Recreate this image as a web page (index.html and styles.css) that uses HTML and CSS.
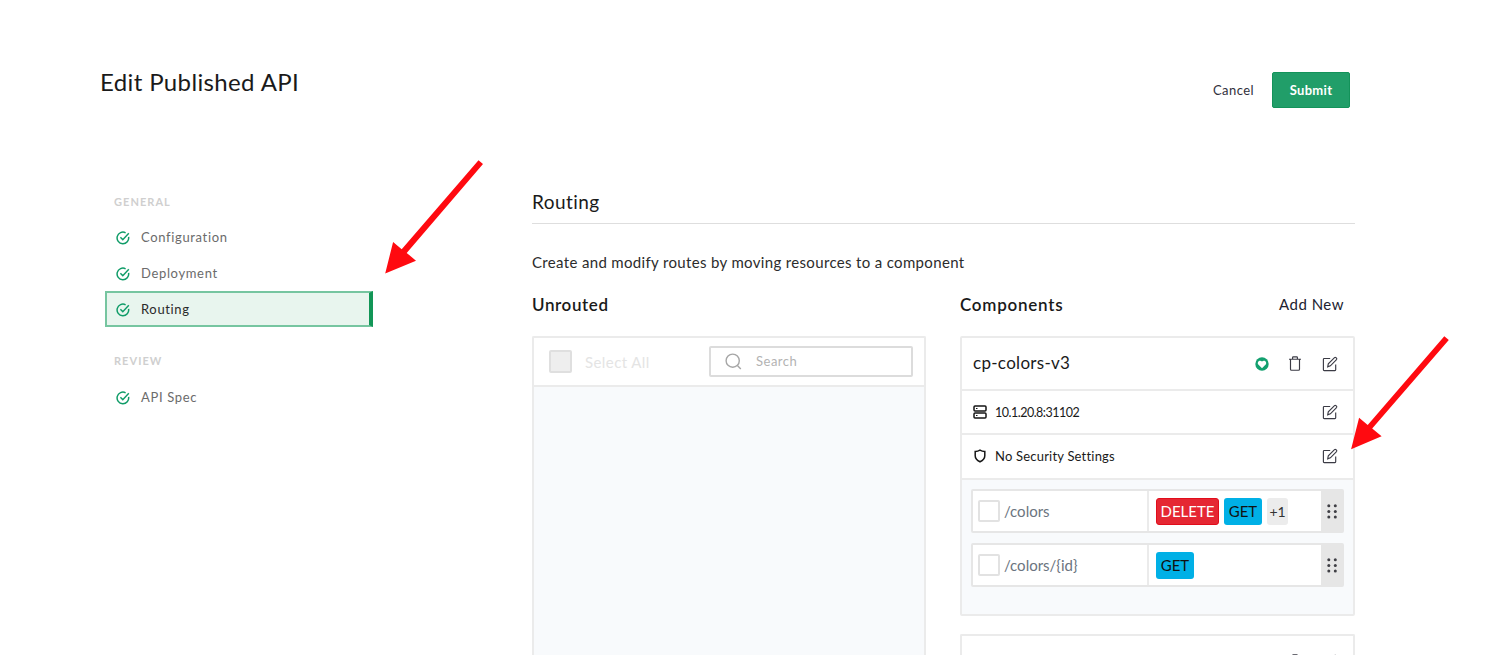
FILE: index.html
```html
<!DOCTYPE html>
<html lang="en">
<head>
<meta charset="utf-8">
<title>Edit Published API</title>
<link rel="stylesheet" href="styles.css">
</head>
<body>
<svg class="defs" width="0" height="0" aria-hidden="true">
  <symbol id="check" viewBox="0 0 14 14"><path d="M12.6 5.9A5.8 5.8 0 1 1 9.6 1.8M4.4 6.3l2.4 2.4 6-6.4" fill="none" stroke="currentColor" stroke-width="1.5"/></symbol>
  <symbol id="edit" viewBox="0 0 16 16"><path d="M8.2 2.5H2.2a.8.8 0 0 0-.8.8v10.5a.8.8 0 0 0 .8.8h10.7a.8.8 0 0 0 .8-.8V8.6M5.7 10.8l.6-3 6.2-6.2q.7-.6 1.4 0l.6.6q.6.7 0 1.4L8.4 9.8Z" fill="none" stroke="currentColor" stroke-width="1.15"/></symbol>
  <symbol id="trash" viewBox="0 0 12 15"><path d="M0 3.2h12M3.6 3V1.500q0-.7.7-.7h3.400q.7 0 .7.7V3M1.500 3.200v10q0 1 1 1h7q1 0 1-1v-10" fill="none" stroke="currentColor" stroke-width="1.15"/></symbol>
  <symbol id="dots" viewBox="0 0 10 15"><g fill="currentColor"><circle cx="1.8" cy="1.8" r="1.5"/><circle cx="8.3" cy="1.8" r="1.5"/><circle cx="1.8" cy="7.4" r="1.5"/><circle cx="8.3" cy="7.4" r="1.5"/><circle cx="1.8" cy="13" r="1.5"/><circle cx="8.3" cy="13" r="1.5"/></g></symbol>
</svg>
<header class="header">
  <h1 class="title">Edit Published API</h1>
  <div class="actions"><span class="cancel">Cancel</span><button class="submit">Submit</button></div>
</header>
<div class="layout">
  <nav class="nav">
    <h2 class="nav-title">GENERAL</h2>
    <a class="nav-item"><svg class="check"><use href="#check"/></svg><span>Configuration</span></a>
    <a class="nav-item"><svg class="check"><use href="#check"/></svg><span>Deployment</span></a>
    <a class="nav-item active"><svg class="check"><use href="#check"/></svg><span>Routing</span></a>
    <h2 class="nav-title review">REVIEW</h2>
    <a class="nav-item"><svg class="check"><use href="#check"/></svg><span>API Spec</span></a>
  </nav>
  <main class="main">
    <h2 class="section-title">Routing</h2>
    <p class="intro">Create and modify routes by moving resources to a component</p>
    <div class="columns">
      <section class="column">
        <div class="column-head"><h3>Unrouted</h3></div>
        <div class="unrouted">
          <div class="toolbar">
            <span class="box disabled"></span><span class="select-all">Select All</span>
            <div class="search"><svg width="17" height="17" viewBox="0 0 17 17"><g fill="none" stroke="#a6a6a6" stroke-width="1.4"><circle cx="7.7" cy="7.7" r="6.6"/><path d="M12.4 12.4l3.400 3.500"/></g></svg><span>Search</span></div>
          </div>
        </div>
      </section>
      <section class="column">
        <div class="column-head"><h3 class="components">Components</h3><a class="add-new">Add New</a></div>
        <article class="card">
          <div class="card-head">
            <span class="card-name">cp-colors-v3</span>
            <div class="tools">
              <svg width="14" height="14" viewBox="0 0 14 14"><circle cx="7" cy="7" r="6.7" fill="#13a06f"/><path d="M7 11.200L3.300 7.500C1.600 5.300 4.600 2.100 7 4.500c2.400-2.400 5.400.8 3.700 3Z" fill="#fff"/></svg>
              <svg class="trash"><use href="#trash"/></svg>
              <svg class="edit"><use href="#edit"/></svg>
            </div>
          </div>
          <div class="card-row"><svg width="14" height="14" viewBox="0 0 14 14"><g fill="none" stroke="#151515" stroke-width="1.5"><rect x="1" y="1" width="12" height="5" rx="1"/><rect x="1" y="8" width="12" height="5" rx="1"/><path d="M3 3.500h1.500M3 10.500h1.500" stroke-width="1"/></g></svg><span class="address">10.1.20.8:31102</span><svg class="edit"><use href="#edit"/></svg></div>
          <div class="card-row security"><svg width="14" height="14" viewBox="0 0 14 14"><path d="M7 1.200q2.400 1.400 4.800 1.300v4.200C11.800 9.500 9.800 11.500 7 12.800 4.200 11.500 2.200 9.500 2.200 6.700V2.500Q4.600 2.600 7 1.200Z" fill="none" stroke="#151515" stroke-width="1.5"/></svg><span>No Security Settings</span><svg class="edit"><use href="#edit"/></svg></div>
          <div class="routes">
            <div class="route">
              <div class="path"><span class="box"></span><span>/colors</span></div>
              <div class="methods"><span class="badge delete">DELETE</span><span class="badge get">GET</span><span class="badge more">+1</span></div>
              <div class="handle"><svg width="10" height="15"><use href="#dots"/></svg></div>
            </div>
            <div class="route">
              <div class="path"><span class="box"></span><span>/colors/{id}</span></div>
              <div class="methods"><span class="badge get">GET</span></div>
              <div class="handle"><svg width="10" height="15"><use href="#dots"/></svg></div>
            </div>
          </div>
        </article>
        <article class="card next">
          <div class="tools"><svg class="trash"><use href="#trash"/></svg><svg class="edit"><use href="#edit"/></svg></div>
        </article>
      </section>
    </div>
  </main>
</div>
<svg class="arrow arrow-nav" width="104" height="120" viewBox="382 157 104 120"><path d="M478.500 160.200l4.500 3.900-76.300 88.800 9.300 7.800-30.800 12.800 7.900-31.500 8.600 7.300Z" fill="#ff0a10"/></svg>
<svg class="arrow arrow-card" width="104" height="120" viewBox="1348 333 104 120"><path d="M1444.300 336.200l4.500 3.900-76.600 88.400 9.400 7.800-30.500 12.900 8-31.500 8.600 7.300Z" fill="#ff0a10"/></svg>
</body>
</html>
```

FILE: styles.css
```css
* { box-sizing: border-box; }
body { margin: 0; width: 1500px; height: 655px; overflow: hidden; position: relative; background: #fff; color: #1a1a1a; font-family: Lato, "Open Sans", sans-serif; font-size: 14px; white-space: nowrap; }
h1, h2, h3, p { margin: 0; font-weight: 400; }
svg { display: block; flex: none; }
.defs { position: absolute; }
.header { display: flex; justify-content: space-between; padding: 65px 150px 0 100px; height: 185px; }
.title { font-size: 24px; line-height: 34px; letter-spacing: .37px; }
.actions { display: flex; align-items: center; gap: 18px; height: 36px; margin-top: 7px; }
.cancel { font-size: 13px; color: #30303c; letter-spacing: .43px; }
.submit { width: 78px; height: 36px; padding: 0; border: 1px solid #13935a; border-radius: 2px; background: #219e69; color: #fff; font: bold 13px Lato, sans-serif; letter-spacing: .3px; }
.layout { display: flex; padding-left: 105px; }
.nav { width: 268px; margin-right: 159px; }
.nav-title { height: 34px; padding-left: 9px; font-size: 11px; line-height: 33px; font-weight: 700; color: #cfcfcf; letter-spacing: 1.05px; }
.nav-title.review { margin-top: 18px; line-height: 32px; }
.nav-item { display: flex; align-items: center; gap: 11px; height: 36px; padding: 1px 0 0 11px; font-size: 13px; color: #6b6b6b; letter-spacing: .65px; }
.nav-item.active { padding: 1px 0 0 9px; border: 2px solid #76c5a0; border-right: 4px solid #129657; background: #e8f5ee; color: #2a2a2a; }
.nav-item span { margin-top: -1px; }
.check { width: 14px; height: 14px; color: #109c68; }
.main { width: 823px; }
.section-title { height: 39px; border-bottom: 1px solid #dedede; font-size: 19px; line-height: 33px; letter-spacing: .45px; }
.intro { margin-top: 25px; height: 27px; line-height: 26px; font-size: 15px; color: #2c2c2c; letter-spacing: .34px; }
.columns { display: flex; gap: 34px; margin-top: 12px; }
.column { width: 394px; flex: none; }
.column:last-child { width: 395px; }
.column-head { display: flex; align-items: center; justify-content: space-between; height: 32px; margin-bottom: 16px; padding-right: 11px; }
.column-head h3 { font-size: 17px; font-weight: 600; letter-spacing: .6px; }
.column-head .components { letter-spacing: .75px; }
.add-new { font-size: 15px; color: #222230; letter-spacing: .5px; }
.unrouted { height: 319px; border: 2px solid #ebebeb; border-bottom: 0; border-radius: 2px 2px 0 0; background: #f8fafc; }
.toolbar { display: flex; align-items: center; height: 49px; padding: 0 11px 0 15px; border-bottom: 2px solid #ebebeb; background: #fff; }
.box { flex: none; width: 22px; height: 22px; border: 2px solid #e2e2e2; border-radius: 2px; background: #fff; }
.box.disabled { width: 23px; height: 23px; border-color: #dfdfdf; background: #eee; }
.select-all { margin-left: 13px; font-size: 15px; color: #e4e4e4; letter-spacing: .42px; }
.search { display: flex; align-items: center; gap: 14px; width: 204px; height: 31px; margin-left: auto; padding-left: 14px; border: 2px solid #dcdcdc; border-radius: 2px; font-size: 13px; color: #b3b3b3; letter-spacing: .5px; }
.search span { margin-top: -1px; }
.card { height: 280px; margin-bottom: 18px; border: 2px solid #ebebeb; border-radius: 2px; background: #fff; }
.card.next { height: 21px; margin: 0; padding: 18px 15px 0 0; border-bottom: 0; border-radius: 2px 2px 0 0; overflow: hidden; }
.card.next .tools { align-items: flex-start; justify-content: flex-end; }
.card-head { display: flex; align-items: center; height: 53px; padding: 0 15px 0 11px; border-bottom: 2px solid #ebebeb; font-size: 17px; }
.card-name { margin-top: -2px; letter-spacing: .3px; }
.tools { display: flex; align-items: center; gap: 20px; margin-left: auto; color: #3b3b45; }
.trash { width: 12px; height: 15px; margin-right: 1px; }
.edit { width: 16px; height: 16px; color: #3b3b45; }
.card-row { display: flex; align-items: center; gap: 8px; height: 44px; padding: 0 15px 0 11px; border-bottom: 2px solid #ebebeb; font-size: 13px; letter-spacing: .2px; }
.card-row .edit { margin-left: auto; }
.card-row.security { height: 45px; padding-bottom: 1px; }
.address { font-size: 12.5px; letter-spacing: -.5px; }
.routes { display: flex; flex-direction: column; gap: 10px; height: 134px; padding: 9px 9px 0; background: #f8fafc; }
.route { display: flex; height: 44px; border: 2px solid #e6e6e6; border-radius: 2px; background: #fff; }
.path { display: flex; align-items: center; gap: 4px; width: 176px; padding-left: 5px; border-right: 2px solid #ebebeb; font-size: 15px; color: #6b7480; }
.methods { display: flex; align-items: center; flex: 1; gap: 5px; padding-left: 7px; }
.badge { display: flex; align-items: center; justify-content: center; height: 27px; border-radius: 3px; font-size: 15px; }
.delete { width: 63px; border: 1px solid #e10d1b; background: #e52733; color: #fff; }
.get { width: 38px; background: #00b0e6; color: #111; }
.more { width: 21px; background: #ececec; color: #333; font-size: 14px; }
.handle { display: flex; align-items: center; justify-content: center; width: 21px; background: #e6e6e6; color: #3f3f45; }
.arrow { position: absolute; }
.arrow-nav { left: 382px; top: 157px; }
.arrow-card { left: 1348px; top: 333px; }
```
